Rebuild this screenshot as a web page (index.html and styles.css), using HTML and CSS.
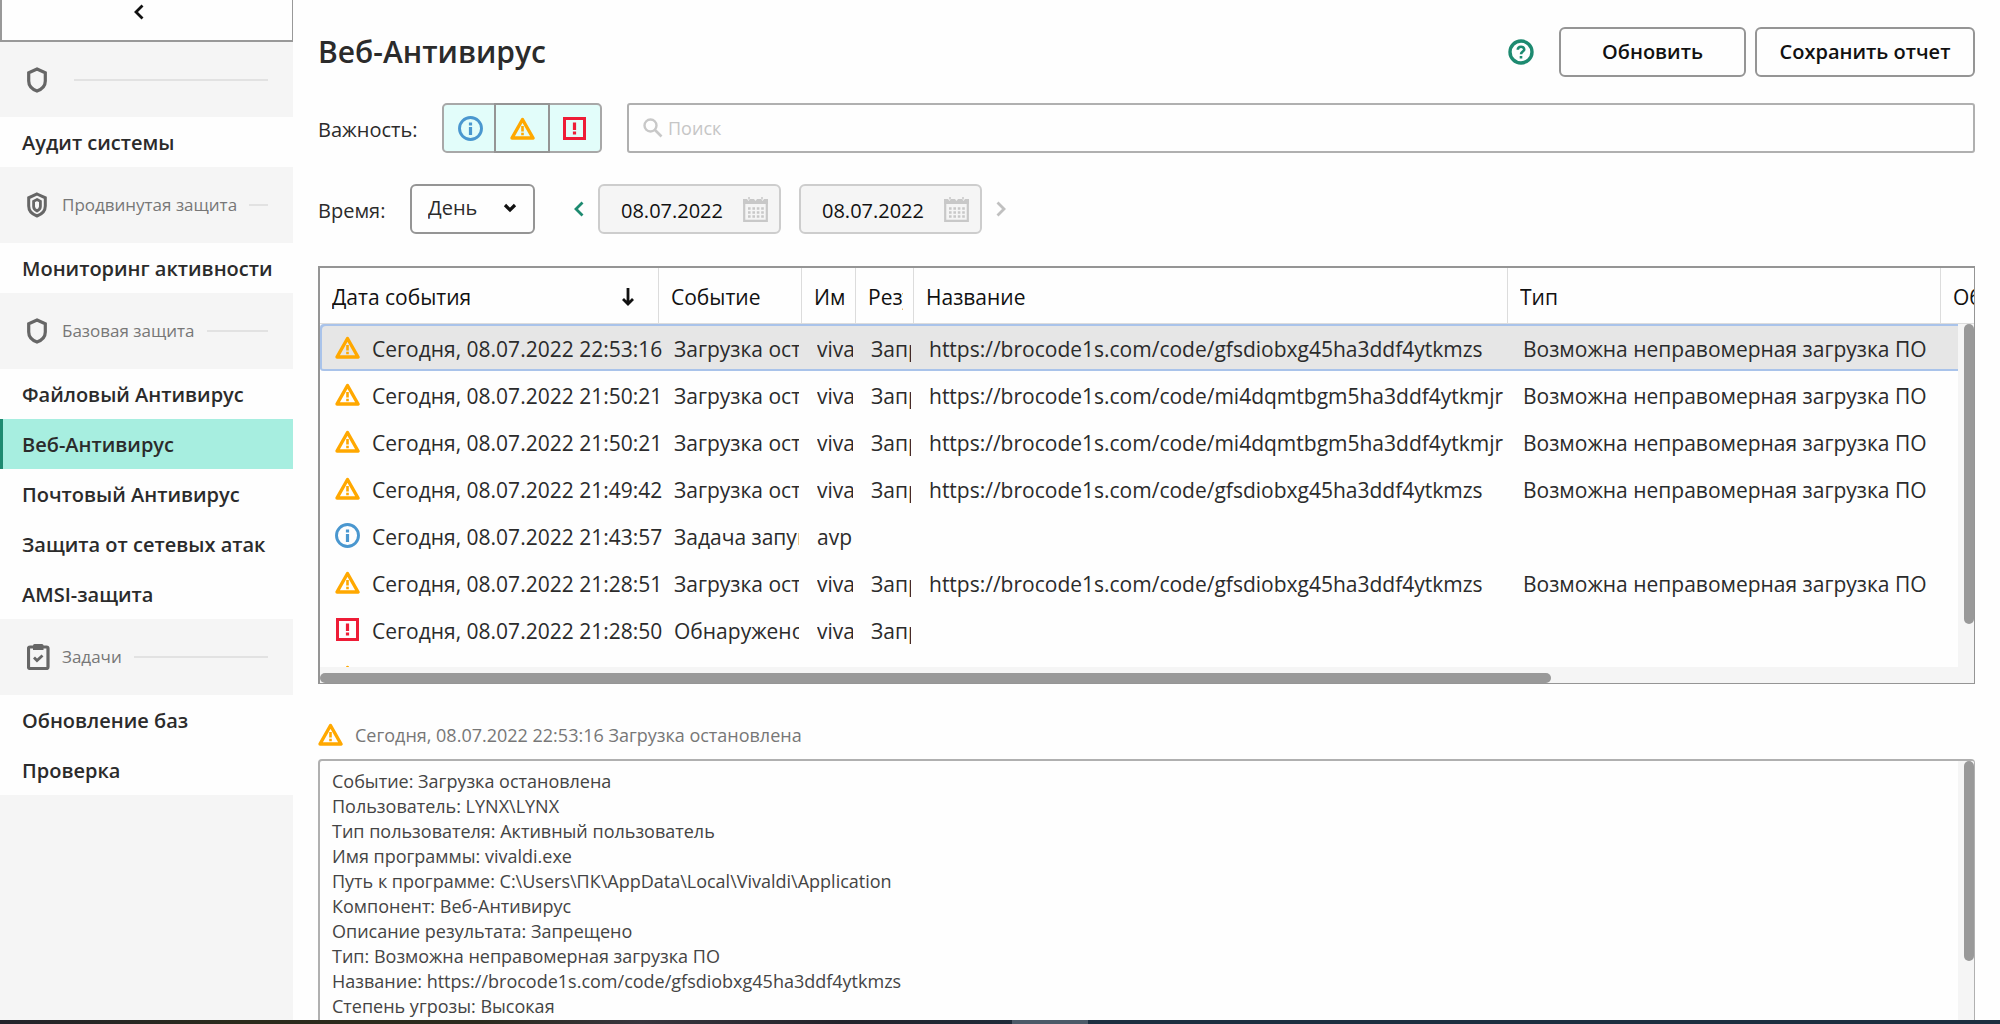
FILE: index.html
```html
<!DOCTYPE html>
<html lang="ru">
<head>
<meta charset="utf-8">
<meta name="viewport" content="width=device-width, initial-scale=1">
<title>Отчеты — Веб-Антивирус</title>
<link rel="stylesheet" href="styles.css">
</head>
<body>
<svg class="sprite" aria-hidden="true">
  <symbol id="i-warn" viewBox="0 0 25 23"><path d="M12.500 2.500 23 21H2Z" fill="none" stroke="#ffa800" stroke-width="3.400" stroke-linejoin="round"/><path d="M12.500 9v5.500M12.500 15.800v2.500" stroke="#ffa800" stroke-width="2.600"/></symbol>
  <symbol id="i-info" viewBox="0 0 25 25"><circle cx="12.500" cy="12.500" r="11" fill="none" stroke="#4a97cf" stroke-width="2.900"/><path d="M12.500 6.500v3M12.500 11v8" stroke="#4a97cf" stroke-width="3.200"/></symbol>
  <symbol id="i-crit" viewBox="0 0 23 23"><rect x="1.500" y="1.500" width="20" height="20" fill="none" stroke="#ee1c36" stroke-width="3"/><path d="M11.500 5.500v7.500M11.500 14.500v3" stroke="#ee1c36" stroke-width="3.200"/></symbol>
  <symbol id="i-shield" viewBox="0 0 20 26"><path d="M10 2 18.300 5.800V14C18.300 18.500 15 22.200 10 24 5 22.200 1.700 18.500 1.700 14V5.800Z" fill="none" stroke="#666" stroke-width="3.200"/></symbol>
  <symbol id="i-shield-in" viewBox="0 0 20 26"><path d="M10 2 18.300 5.800V14C18.300 18.500 15 22.200 10 24 5 22.200 1.700 18.500 1.700 14V5.800Z" fill="none" stroke="#666" stroke-width="3"/><path d="M10 7.500 13.400 9.300V14.500C13.400 16.500 12 18 10 19 8 18 6.600 16.500 6.600 14.500V9.300Z" fill="none" stroke="#666" stroke-width="2.800"/></symbol>
  <symbol id="i-task" viewBox="0 0 23 26"><rect x="1.500" y="3" width="19.500" height="21.500" rx="1.500" fill="none" stroke="#666" stroke-width="3.200"/><path d="M6 1.500Q6 0 7.500 0H15Q16.500 0 16.500 1.500V6H6Z" fill="#666"/><path d="m7 13.500 3 3 5.500-5" fill="none" stroke="#666" stroke-width="2.800"/></symbol>
  <symbol id="i-cal" viewBox="0 0 25 25"><path d="M1.200 3v20.800h22.600V3" fill="none" stroke="#c8c8c8" stroke-width="2.200"/><path d="M0 2h4l1.500 2L7 2h4l1.500 2L14 2h4l1.500 2L21 2h4v5H0Z" fill="#c8c8c8"/><path d="M6 0v2.500M19 0v2.500" stroke="#c8c8c8" stroke-width="1.500"/><path d="M5 11.500h16M5 15.500h16M5 19.500h16" stroke="#c8c8c8" stroke-width="2.600" stroke-dasharray="2.600 1.800"/></symbol>
  <symbol id="i-left" viewBox="0 0 10 16"><path d="M8.500 1.500 2 8l6.500 6.500" fill="none" stroke="currentColor" stroke-width="2.800"/></symbol>
  <symbol id="i-right" viewBox="0 0 10 16"><path d="M1.500 1.500 8 8l-6.500 6.500" fill="none" stroke="currentColor" stroke-width="2.800"/></symbol>
</svg>

<div class="app">
  <aside class="sidebar">
    <button class="collapse" type="button" aria-label="Свернуть"><svg width="10" height="16"><use href="#i-left"/></svg></button>
    <nav class="nav">
      <h2 class="group"><svg width="20" height="26"><use href="#i-shield"/></svg><span></span></h2>
      <a class="link" href="#audit">Аудит системы</a>
      <h2 class="group"><svg width="20" height="26"><use href="#i-shield-in"/></svg><span>Продвинутая защита</span></h2>
      <a class="link" href="#activity">Мониторинг активности</a>
      <h2 class="group"><svg width="20" height="26"><use href="#i-shield"/></svg><span>Базовая защита</span></h2>
      <a class="link" href="#file">Файловый Антивирус</a>
      <a class="link current" href="#web" aria-current="page">Веб-Антивирус</a>
      <a class="link" href="#mail">Почтовый Антивирус</a>
      <a class="link" href="#network">Защита от сетевых атак</a>
      <a class="link" href="#amsi">AMSI-защита</a>
      <h2 class="group group-tasks"><svg width="23" height="26"><use href="#i-task"/></svg><span>Задачи</span></h2>
      <a class="link" href="#update">Обновление баз</a>
      <a class="link" href="#scan">Проверка</a>
    </nav>
  </aside>

  <main class="main">
    <header class="head">
      <h1 class="title">Веб-Антивирус</h1>
      <button class="help" type="button" aria-label="Справка"><svg width="26" height="26" viewBox="0 0 26 26"><circle cx="13" cy="13" r="11" fill="none" stroke="#1d8a70" stroke-width="3.400"/><path d="M9.800 10.800C9.800 6.700 16.200 6.700 16.200 10.500 16.200 12.600 13 12.600 13 15.300M13 17v2.600" fill="none" stroke="#1d8a70" stroke-width="2.600"/></svg></button>
      <button class="btn btn-refresh" type="button">Обновить</button>
      <button class="btn btn-save" type="button">Сохранить отчет</button>
    </header>

    <div class="row severity-row">
      <span class="label" id="sev">Важность:</span>
      <div class="severity" role="group" aria-labelledby="sev">
        <button type="button" aria-pressed="true" aria-label="Информационные"><svg width="25" height="25"><use href="#i-info"/></svg></button>
        <button type="button" aria-pressed="true" aria-label="Важные"><svg width="25" height="23"><use href="#i-warn"/></svg></button>
        <button type="button" aria-pressed="true" aria-label="Критические"><svg width="23" height="23"><use href="#i-crit"/></svg></button>
      </div>
      <label class="search">
        <svg width="20" height="20" viewBox="0 0 20 20"><circle cx="7.500" cy="7.500" r="6" fill="none" stroke="#c8c8c8" stroke-width="2.400"/><path d="m12 12 6.500 6.500" stroke="#c8c8c8" stroke-width="2.600"/></svg>
        <input type="text" placeholder="Поиск" aria-label="Поиск">
      </label>
    </div>

    <div class="row">
      <label class="label" for="period">Время:</label>
      <div class="period">
        <select id="period"><option>День</option><option>Неделя</option><option>Месяц</option></select>
        <svg width="14" height="10" viewBox="0 0 14 10"><path d="m2 2 5 5 5-5" fill="none" stroke="#111" stroke-width="3.200"/></svg>
      </div>
      <button class="step prev" type="button" aria-label="Назад"><svg width="10" height="16"><use href="#i-left"/></svg></button>
      <label class="date"><input type="text" value="08.07.2022" aria-label="Начало периода"><svg width="25" height="25"><use href="#i-cal"/></svg></label>
      <label class="date"><input type="text" value="08.07.2022" aria-label="Конец периода"><svg width="25" height="25"><use href="#i-cal"/></svg></label>
      <button class="step next" type="button" aria-label="Вперед"><svg width="10" height="16"><use href="#i-right"/></svg></button>
    </div>

    <section class="list" aria-label="События">
      <table class="events">
        <colgroup><col class="c-date"><col class="c-event"><col class="c-name"><col class="c-result"><col class="c-title"><col class="c-type"><col class="c-object"></colgroup>
        <thead>
          <tr><th><div class="sorted">Дата события <svg width="12" height="18" viewBox="0 0 12 18"><path d="M6 0v15M1 11l5 5 5-5" fill="none" stroke="#111" stroke-width="2.800"/></svg></div></th><th><div>Событие</div></th><th><div>Имя</div></th><th><div>Результат</div></th><th><div>Название</div></th><th><div>Тип</div></th><th><div>Объект</div></th></tr>
        </thead>
        <tbody>
          <tr class="selected"><td><div class="when"><svg width="25" height="23"><use href="#i-warn"/></svg>Сегодня, 08.07.2022 22:53:16</div></td><td><div>Загрузка остановлена</div></td><td><div>vivaldi.exe</div></td><td><div>Запрещено</div></td><td><div>https://brocode1s.com/code/gfsdiobxg45ha3ddf4ytkmzs</div></td><td><div>Возможна неправомерная загрузка ПО</div></td><td></td></tr>
          <tr><td><div class="when"><svg width="25" height="23"><use href="#i-warn"/></svg>Сегодня, 08.07.2022 21:50:21</div></td><td><div>Загрузка остановлена</div></td><td><div>vivaldi.exe</div></td><td><div>Запрещено</div></td><td><div>https://brocode1s.com/code/mi4dqmtbgm5ha3ddf4ytkmjr</div></td><td><div>Возможна неправомерная загрузка ПО</div></td><td></td></tr>
          <tr><td><div class="when"><svg width="25" height="23"><use href="#i-warn"/></svg>Сегодня, 08.07.2022 21:50:21</div></td><td><div>Загрузка остановлена</div></td><td><div>vivaldi.exe</div></td><td><div>Запрещено</div></td><td><div>https://brocode1s.com/code/mi4dqmtbgm5ha3ddf4ytkmjr</div></td><td><div>Возможна неправомерная загрузка ПО</div></td><td></td></tr>
          <tr><td><div class="when"><svg width="25" height="23"><use href="#i-warn"/></svg>Сегодня, 08.07.2022 21:49:42</div></td><td><div>Загрузка остановлена</div></td><td><div>vivaldi.exe</div></td><td><div>Запрещено</div></td><td><div>https://brocode1s.com/code/gfsdiobxg45ha3ddf4ytkmzs</div></td><td><div>Возможна неправомерная загрузка ПО</div></td><td></td></tr>
          <tr><td><div class="when"><svg width="25" height="25"><use href="#i-info"/></svg>Сегодня, 08.07.2022 21:43:57</div></td><td><div>Задача запущена</div></td><td><div>avp</div></td><td></td><td></td><td></td><td></td></tr>
          <tr><td><div class="when"><svg width="25" height="23"><use href="#i-warn"/></svg>Сегодня, 08.07.2022 21:28:51</div></td><td><div>Загрузка остановлена</div></td><td><div>vivaldi.exe</div></td><td><div>Запрещено</div></td><td><div>https://brocode1s.com/code/gfsdiobxg45ha3ddf4ytkmzs</div></td><td><div>Возможна неправомерная загрузка ПО</div></td><td></td></tr>
          <tr><td><div class="when"><svg width="25" height="23"><use href="#i-crit"/></svg>Сегодня, 08.07.2022 21:28:50</div></td><td><div>Обнаружено</div></td><td><div>vivaldi.exe</div></td><td><div>Запрещено</div></td><td></td><td></td><td></td></tr>
          <tr><td><div class="when"><svg width="25" height="23"><use href="#i-warn"/></svg></div></td><td></td><td></td><td></td><td></td><td></td><td></td></tr>
        </tbody>
      </table>
      <div class="track track-y"><div class="thumb"></div></div>
      <div class="track track-x"><div class="thumb"></div></div>
    </section>

    <div class="summary"><svg width="25" height="23"><use href="#i-warn"/></svg>Сегодня, 08.07.2022 22:53:16 Загрузка остановлена</div>

    <section class="details" aria-label="Подробности">
      <div class="text">
        <p>Событие: Загрузка остановлена</p>
        <p>Пользователь: LYNX\LYNX</p>
        <p>Тип пользователя: Активный пользователь</p>
        <p>Имя программы: vivaldi.exe</p>
        <p>Путь к программе: C:\Users\ПК\AppData\Local\Vivaldi\Application</p>
        <p>Компонент: Веб-Антивирус</p>
        <p>Описание результата: Запрещено</p>
        <p>Тип: Возможна неправомерная загрузка ПО</p>
        <p>Название: https://brocode1s.com/code/gfsdiobxg45ha3ddf4ytkmzs</p>
        <p>Степень угрозы: Высокая</p>
      </div>
      <div class="track track-y"><div class="thumb"></div></div>
    </section>
  </main>
</div>
<div class="taskbar"></div>
</body>
</html>
```

FILE: styles.css
```css
* { box-sizing: border-box; }

body {
  margin: 0;
  height: 100vh;
  display: flex;
  flex-direction: column;
  overflow: hidden;
  background: #fefefe;
  color: #2b2b2b;
  font: 20px/28px "Open Sans", "Noto Sans", sans-serif;
}

button, input, select { font: inherit; color: inherit; margin: 0; }
button { padding: 0; border: 0; background: none; }
h1, h2, p { margin: 0; }
svg { display: block; flex: none; }
.sprite { position: absolute; width: 0; height: 0; }

.app { flex: 1; min-height: 0; display: flex; }
.taskbar {
  flex: none;
  height: 4px;
  background:
    linear-gradient(#4c5a68, #4c5a68) 52.600% 0 / 76px 4px no-repeat,
    linear-gradient(90deg, #23232b 0, #2b2b1c 12%, #2b2a1e 24%, #38363e 32%, #23232b 42%, #1c2f40 55%, #1c2f40 100%);
}

/* Sidebar */
.sidebar { flex: none; width: 293px; background: #f5f5f5; }
.collapse {
  display: flex;
  justify-content: center;
  align-items: flex-start;
  width: 100%;
  height: 42px;
  padding: 4px 16px 0 0;
  border: solid #999;
  border-width: 0 1px 2px 2px;
  background: #fefefe;
  color: #111;
}
.nav { display: flex; flex-direction: column; }
.group {
  display: flex;
  align-items: center;
  height: 76px;
  padding: 0 25px 0 27px;
  color: #777;
  font-size: 17px;
  font-weight: 400;
}
.group:first-child { height: 75px; }
.group span { margin-left: 15px; }
.group-tasks span { margin-left: 12px; }
.group::after { content: ""; flex: 1; height: 2px; margin-left: 12px; background: #e2e2e2; }
.link {
  display: flex;
  align-items: center;
  height: 50px;
  padding: 2px 0 0 22px;
  background: #fefefe;
  color: #2b2b2b;
  font-weight: 600;
  text-decoration: none;
  white-space: nowrap;
}
.current { background: #a7eee0; box-shadow: inset 3px 0 #1d8a70; }

/* Main column */
.main { flex: 1; min-width: 0; display: flex; flex-direction: column; padding: 27px 25px 0; }
.head { display: flex; align-items: center; gap: 9px; height: 50px; }
.title { flex: 1; font-size: 30px; line-height: 40px; font-weight: 600; }
.help { margin-right: 16px; }
.btn {
  height: 50px;
  border: 2px solid #959595;
  border-radius: 6px;
  background: #fefefe;
  color: #111;
  font-weight: 600;
}
.btn-refresh { width: 187px; }
.btn-save { width: 220px; }

.row { display: flex; align-items: center; height: 50px; margin-top: 31px; }
.severity-row { margin-top: 26px; }
.label { width: 99px; padding-top: 3px; white-space: nowrap; }
.severity {
  display: flex;
  width: 160px;
  height: 50px;
  margin: 0 25px;
  border: 2px solid #a8a8a8;
  border-radius: 5px;
  background: #e2fdfa;
}
.severity button { flex: 1; display: flex; align-items: center; justify-content: center; }
.severity button:nth-child(2) { box-shadow: 0 0 0 2px #959595; }
.search {
  flex: 1;
  display: flex;
  align-items: center;
  gap: 5px;
  height: 50px;
  padding: 0 14px;
  border: 2px solid #b0b0b0;
  border-radius: 3px;
}
.search input { flex: 1; min-width: 0; padding: 0; border: 0; outline: 0; background: none; font-size: 18px; }
.search input::placeholder { color: #c6c6c6; opacity: 1; }

.label[for="period"] { width: 92px; }
.period { position: relative; }
.period select {
  width: 125px;
  height: 50px;
  padding: 0 0 2px 16px;
  border: 2px solid #959595;
  border-radius: 6px;
  background: #fefefe;
  appearance: none;
}
.period svg { position: absolute; right: 18px; top: 19px; pointer-events: none; }
.step { color: #1d8a70; }
.prev { margin: 0 14px 0 39px; }
.next { margin-left: -4px; color: #c0c0c0; }
.date {
  display: flex;
  align-items: center;
  width: 183px;
  height: 50px;
  margin-right: 18px;
  padding: 0 11px 0 21px;
  border: 2px solid #cdcdcd;
  border-radius: 6px;
  background: #f5f5f5;
}
.date input { flex: 1; min-width: 0; padding: 4px 0 0; border: 0; outline: 0; background: none; color: #111; }

/* Event list */
.list {
  position: relative;
  flex: none;
  height: 418px;
  margin-top: 32px;
  border: 2px solid #959595;
  border-width: 2px 1px 1px 2px;
  overflow: hidden;
}
.events { width: 100%; table-layout: fixed; border-collapse: separate; border-spacing: 0; font-size: 21px; }
.events div { overflow: hidden; }
.c-date { width: 339px; }
.c-event { width: 143px; }
.c-name { width: 54px; }
.c-result { width: 58px; }
.c-type { width: 433px; }
.c-object { width: 33px; }
.events th {
  height: 56px;
  padding: 2px 10px 0 12px;
  border-right: 1px solid #dcdcdc;
  border-bottom: 1px solid #dcdcdc;
  color: #111;
  font-weight: 400;
  text-align: left;
  white-space: nowrap;
}
.events th:last-child { padding-right: 0; border-right: 0; }
.events .sorted { display: flex; align-items: center; justify-content: space-between; padding-right: 14px; }
.events td { height: 47px; padding: 2px 3px 0 15px; white-space: nowrap; }
.events .when { display: flex; align-items: center; gap: 12px; overflow: visible; }
.when svg { margin-bottom: 3px; }
.selected td { background: #e6e6e6; box-shadow: inset 0 2px #a9c3ea, inset 0 -2px #a9c3ea; }
.selected td:first-child { border-radius: 4px 0 0 4px; box-shadow: inset 2px 2px #a9c3ea, inset 0 -2px #a9c3ea; }

.track { position: absolute; background: #f5f5f5; }
.track-y { top: 0; right: 0; bottom: 0; width: 16px; padding-left: 6px; }
.track-x { left: 0; right: 0; bottom: 0; height: 16px; padding-top: 6px; }
.thumb { height: 100%; border-radius: 5px; background: #999; }
.list .track-y { top: 56px; }
.list .track-y .thumb { height: 300px; }
.list .track-x .thumb { width: 74.400%; }

/* Event details */
.summary { display: flex; align-items: center; gap: 12px; height: 75px; padding-top: 26px; color: #777; font-size: 18px; }
.details {
  position: relative;
  flex: 1;
  min-height: 0;
  border: 2px solid #b0b0b0;
  border-width: 2px 1px 0 2px;
  border-radius: 4px 4px 0 0;
  overflow: hidden;
}
.text { padding: 8px 12px; color: #444; font-size: 18px; line-height: 25px; }
.details .thumb { height: 200px; }
```
